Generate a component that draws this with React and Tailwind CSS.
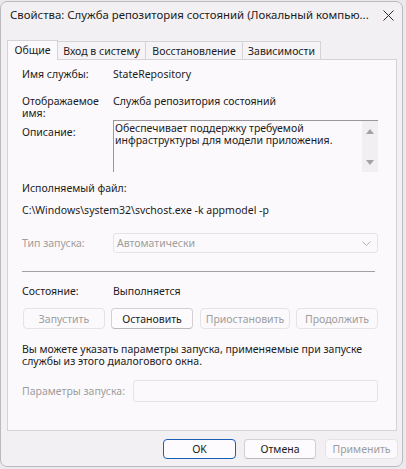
import React from "react";

const font = { fontFamily: '"Noto Sans", "Open Sans", sans-serif' };

function Btn({ children, disabled, primary, className = "" }) {
  return (
    <div
      className={`flex items-center justify-center rounded-[4px] text-[10.5px] leading-[12px] ${
        disabled
          ? "border border-[#e6e3e6] bg-[#fbf9fb] text-[#9d9d9d]"
          : primary
          ? "border border-[#1a5fb4] bg-[#fdfbfd] text-[#1b1b1b]"
          : "border border-[#d3d0d3] border-b-[#bcb9bc] bg-[#fdfbfd] text-[#1b1b1b]"
      } ${className}`}
    >
      {children}
    </div>
  );
}

export default function App() {
  return (
    <div className="w-[406px] h-[469px] bg-[#ebe9eb] pt-[1px] text-[#1b1b1b] text-[10.5px] leading-[12px]" style={font}>
      <div className="w-[403px] h-[466px] bg-[#f3f0f3] rounded-[7px] border border-[#bdbabd] flex flex-col overflow-hidden">
        {/* title bar */}
        <div className="h-[26px] shrink-0 flex items-center pl-[9px] pr-[8px]">
          <div className="flex-1 whitespace-nowrap overflow-hidden text-[11.4px] leading-[14px]">
            Свойства: Служба репозитория состояний (Локальный компью...
          </div>
          <svg width="11" height="11" viewBox="0 0 11 11" className="ml-[8px]">
            <path d="M0.5 0.5L10.5 10.5M10.5 0.5L0.5 10.5" stroke="#2a2a2a" strokeWidth="1" />
          </svg>
        </div>

        {/* tabs */}
        <div className="h-[31px] shrink-0 flex items-end pl-[6px]">
          <div className="w-[51px] h-[20px] border border-b-0 border-[#d6d3d6] bg-[#fcf9fc] flex items-center justify-center pb-[2px] relative z-10 -mb-px">
            Общие
          </div>
          <div className="w-[88px] h-[18px] border border-l-0 border-b-0 border-[#d6d3d6] bg-[#f6f3f6] flex items-center justify-center">
            Вход в систему
          </div>
          <div className="w-[97px] h-[18px] border border-l-0 border-b-0 border-[#d6d3d6] bg-[#f6f3f6] flex items-center justify-center">
            Восстановление
          </div>
          <div className="w-[78px] h-[18px] border border-l-0 border-b-0 border-[#d6d3d6] bg-[#f6f3f6] flex items-center justify-center">
            Зависимости
          </div>
        </div>

        {/* panel */}
        <div className="ml-[6px] mr-[5px] h-[372px] shrink-0 border border-[#d6d3d6] bg-[#fcf9fc] pl-[14px] pr-[18px] pt-[8px] flex flex-col">
          <div className="flex">
            <div className="w-[91px] shrink-0">Имя службы:</div>
            <div>StateRepository</div>
          </div>

          <div className="mt-[15px] flex">
            <div className="w-[91px] shrink-0">
              Отображаемое
              <br />
              имя:
            </div>
            <div>Служба репозитория состояний</div>
          </div>

          <div className="mt-[1px] flex">
            <div className="w-[91px] shrink-0 pt-[6px]">Описание:</div>
            <div className="flex-1 h-[52px] border-t border-l border-[#9a979a] flex">
              <div className="flex-1 pl-[1px] pt-[1px]">
                Обеспечивает поддержку требуемой
                <br />
                инфраструктуры для модели приложения.
              </div>
              <div className="w-[16px] bg-[#f2eff2] flex flex-col items-center justify-between pt-[8px] pb-[7px]">
                <svg width="8" height="5" viewBox="0 0 8 5">
                  <path d="M0 5L4 0L8 5Z" fill="#a3a3a3" />
                </svg>
                <svg width="8" height="5" viewBox="0 0 8 5">
                  <path d="M0 0L8 0L4 5Z" fill="#a3a3a3" />
                </svg>
              </div>
            </div>
          </div>

          <div className="mt-[10px]">Исполняемый файл:</div>
          <div className="mt-[10px]">C:\Windows\system32\svchost.exe -k appmodel -p</div>

          <div className="mt-[17px] flex items-center">
            <div className="w-[91px] shrink-0 text-[#9d9d9d]">Тип запуска:</div>
            <div className="flex-1 h-[20px] rounded-[3px] border border-[#e6e3e6] bg-[#fbf9fb] flex items-center pl-[3px] pr-[6px] text-[#9d9d9d]">
              <span className="flex-1">Автоматически</span>
              <svg width="9" height="5" viewBox="0 0 9 5">
                <path d="M0.5 0.5L4.5 4.5L8.5 0.5" fill="none" stroke="#b3b0b3" strokeWidth="1" />
              </svg>
            </div>
          </div>

          <div className="mt-[18px] h-px bg-[#a3a0a3] mr-[3px]" />

          <div className="mt-[13px] flex">
            <div className="w-[91px] shrink-0">Состояние:</div>
            <div>Выполняется</div>
          </div>

          <div className="mt-[11px] flex">
            <Btn disabled className="w-[82px] h-[21px] ml-[1px]">Запустить</Btn>
            <Btn className="w-[82px] h-[21px] ml-[6px]">Остановить</Btn>
            <Btn disabled className="w-[90px] h-[21px] ml-[7px]">Приостановить</Btn>
            <Btn disabled className="w-[82px] h-[21px] ml-[6px]">Продолжить</Btn>
          </div>

          <div className="mt-[14px]">
            Вы можете указать параметры запуска, применяемые при запуске
            <br />
            службы из этого диалогового окна.
          </div>

          <div className="mt-[13px] flex items-center">
            <div className="w-[111px] shrink-0 whitespace-nowrap text-[#9d9d9d]">Параметры запуска:</div>
            <div className="flex-1 h-[22px] rounded-[3px] border border-[#e6e3e6] bg-[#fbf9fb]" />
          </div>
        </div>

        {/* bottom buttons */}
        <div className="mt-[8px] flex justify-end pr-[4px]">
          <Btn primary className="w-[73px] h-[20px]">OK</Btn>
          <Btn className="w-[72px] h-[20px] ml-[8px]">Отмена</Btn>
          <Btn disabled className="w-[73px] h-[20px] ml-[9px]">Применить</Btn>
        </div>
      </div>
    </div>
  );
}
